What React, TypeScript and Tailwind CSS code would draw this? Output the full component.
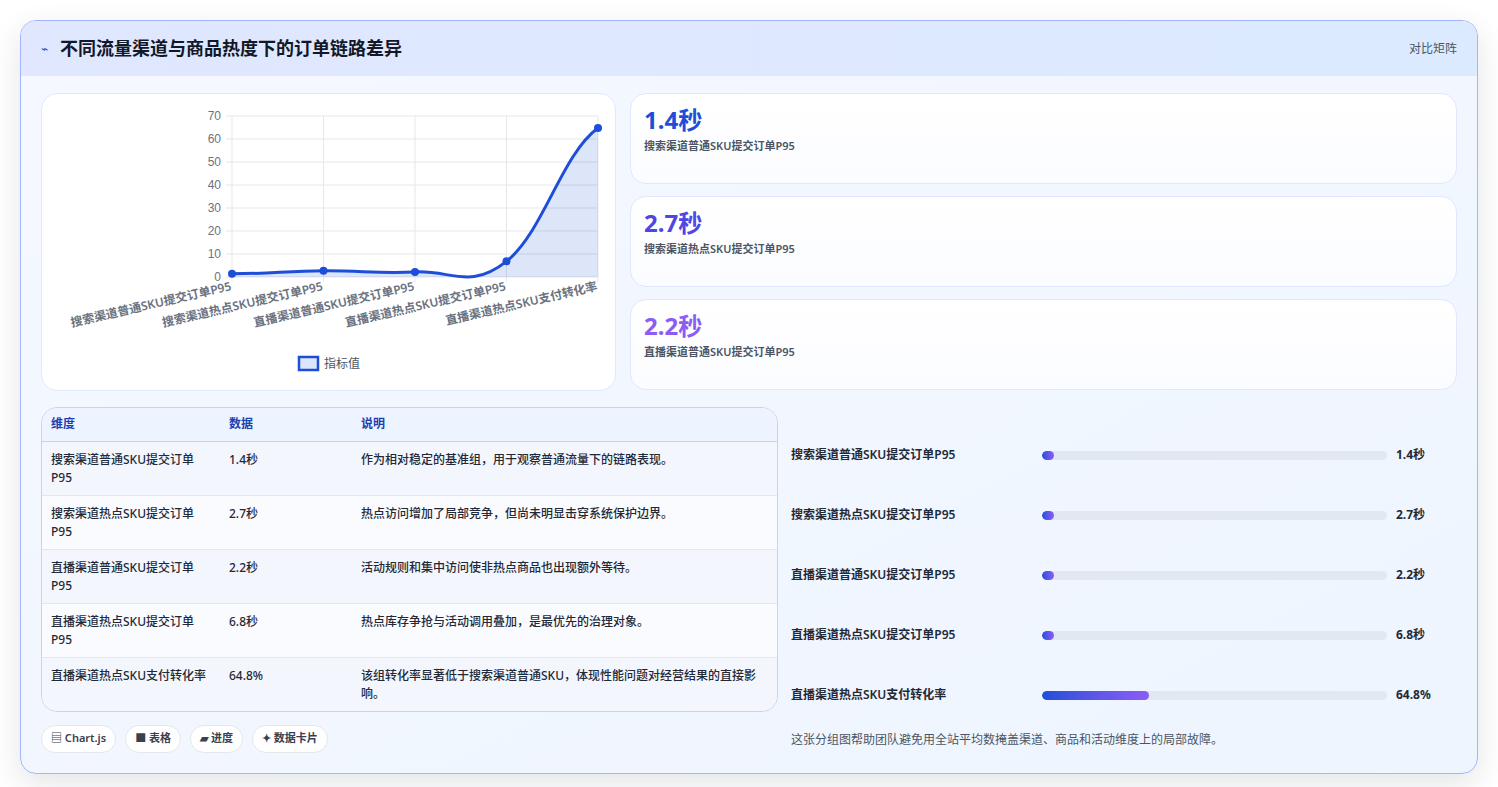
import React from "react";

const F = { fontFamily: '"Noto Sans", "Noto Sans CJK SC", sans-serif' };
const vals = [1.4, 2.7, 2.2, 6.8, 64.8];
const labels = ["搜索渠道普通SKU提交订单P95", "搜索渠道热点SKU提交订单P95", "直播渠道普通SKU提交订单P95", "直播渠道热点SKU提交订单P95", "直播渠道热点SKU支付转化率"];
const xs = [190, 281.5, 373, 464.5, 556];
const y = (v: number) => 183 - (v / 70) * 161;

function Chart() {
  const pts = vals.map((v, i) => [xs[i], y(v)]);
  let d = `M${pts[0][0]},${pts[0][1]}`;
  for (let i = 1; i < pts.length; i++) {
    const [x0, y0] = pts[i - 1];
    const [x1, y1] = pts[i];
    const dx = (x1 - x0) / 2.5;
    const prevSlope = i > 1 ? (y1 - pts[i - 2][1]) / (x1 - pts[i - 2][0]) : 0;
    const nextSlope = i < pts.length - 1 ? (pts[i + 1][1] - y0) / (pts[i + 1][0] - x0) : (y1 - y0) / (x1 - x0);
    d += ` C${x0 + dx},${y0 + prevSlope * dx * (i > 1 ? 1 : 0)} ${x1 - dx},${y1 - nextSlope * dx * (i < pts.length - 1 ? 1 : 0.5)} ${x1},${y1}`;
  }
  const area = d + ` L556,183 L190,183 Z`;
  return (
    <svg width="575" height="298" style={F}>
      {[0, 10, 20, 30, 40, 50, 60, 70].map((t) => (
        <g key={t}>
          <line x1={184} x2={556} y1={y(t)} y2={y(t)} stroke="#e5e7eb" />
          <text x={179} y={y(t) + 4} textAnchor="end" fontSize="12" fill="#6b7280" fontFamily="Liberation Sans, sans-serif">{t}</text>
        </g>
      ))}
      {xs.map((x) => <line key={x} x1={x} x2={x} y1={22} y2={188} stroke="#e5e7eb" />)}
      <path d={area} fill="rgba(29,78,216,0.15)" />
      <path d={d} fill="none" stroke="#1d4ed8" strokeWidth="3" />
      {pts.map(([a, b], i) => <circle key={i} cx={a} cy={b} r="4" fill="#1d4ed8" />)}
      {labels.map((l, i) => (
        <text key={i} transform={`translate(${xs[i]},196) rotate(-13)`} textAnchor="end" fontSize="12" fontWeight="600" fill="#6b7280">{l}</text>
      ))}
      <rect x="257" y="263" width="19" height="13" fill="rgba(29,78,216,0.15)" stroke="#1d4ed8" strokeWidth="2.5" />
      <text x="282" y="274" fontSize="12" fill="#4b5563">指标值</text>
    </svg>
  );
}

const rows = [
  ["搜索渠道普通SKU提交订单P95", "1.4秒", "作为相对稳定的基准组，用于观察普通流量下的链路表现。"],
  ["搜索渠道热点SKU提交订单P95", "2.7秒", "热点访问增加了局部竞争，但尚未明显击穿系统保护边界。"],
  ["直播渠道普通SKU提交订单P95", "2.2秒", "活动规则和集中访问使非热点商品也出现额外等待。"],
  ["直播渠道热点SKU提交订单P95", "6.8秒", "热点库存争抢与活动调用叠加，是最优先的治理对象。"],
  ["直播渠道热点SKU支付转化率", "64.8%", "该组转化率显著低于搜索渠道普通SKU，体现性能问题对经营结果的直接影响。"],
];

export default function App() {
  return (
    <div className="min-h-[787px] bg-white p-5" style={F}>
      <div className="rounded-2xl border border-[#a5b4fc] overflow-hidden shadow-[0_10px_30px_rgba(30,41,59,0.12)] bg-gradient-to-br from-[#f5f8ff] to-[#eef5ff]">
        <div className="h-[55px] flex items-center justify-between px-5 bg-gradient-to-r from-[#e0e7ff] to-[#dbeafe]">
          <div className="flex items-center gap-3">
            <span className="text-[#1d4ed8] text-xs">⌁</span>
            <span className="text-[18px] font-bold text-[#111827]">不同流量渠道与商品热度下的订单链路差异</span>
          </div>
          <span className="text-[12px] text-[#4b5563]">对比矩阵</span>
        </div>
        <div className="p-5 pt-[17px] flex flex-col gap-4">
          <div className="grid grid-cols-[575px_1fr] gap-[14px]">
            <div className="h-[298px] bg-white rounded-2xl border border-[#e0e7ff]"><Chart /></div>
            <div className="flex flex-col gap-3">
              {[["1.4秒", "text-[#1d4ed8]", 0], ["2.7秒", "text-[#4f46e5]", 1], ["2.2秒", "text-[#8b5cf6]", 2]].map(([v, c, i]) => (
                <div key={v as string} className="h-[91px] rounded-2xl border border-[#e0e7ff] bg-gradient-to-b from-white to-[#fbfcff] px-[13px] pt-[9px]">
                  <div className={`text-[24px] font-bold leading-[34px] ${c}`}>{v}</div>
                  <div className="text-[11px] font-semibold text-[#4b5563] mt-[1px]">{labels[i as number]}</div>
                </div>
              ))}
            </div>
          </div>
          <div className="grid grid-cols-[737px_1fr] gap-[13px]">
            <div>
              <div className="rounded-2xl border border-[#cbd5e1] overflow-hidden">
                <table className="w-full text-[12px] text-[#1f2937]">
                  <thead>
                    <tr className="bg-[#eef4ff] text-[#1e40af] border-b border-[#cbd5e1] h-[33px] text-left">
                      <th className="font-semibold px-[9px] w-[178px]">维度</th>
                      <th className="font-semibold px-[9px] w-[132px]">数据</th>
                      <th className="font-semibold px-[9px]">说明</th>
                    </tr>
                  </thead>
                  <tbody>
                    {rows.map((r, i) => (
                      <tr key={i} className={`${i % 2 === 0 ? "bg-[#f3f6fd]" : "bg-[#fafbfe]"} ${i < 4 ? "border-b border-[#e2e8f0]" : ""} align-top`}>
                        {r.map((c, j) => <td key={j} className="px-[9px] pt-[9px] pb-[8px] h-[53px] leading-[18px] font-medium">{c}</td>)}
                      </tr>
                    ))}
                  </tbody>
                </table>
              </div>
              <div className="flex gap-[9px] mt-[13px]">
                {["▤ Chart.js", "■ 表格", "▰ 进度", "✦ 数据卡片"].map((t) => (
                  <span key={t} className="h-[28px] px-[9px] rounded-full bg-white border border-[#e5e7eb] text-[11px] font-semibold text-[#374151] flex items-center">{t}</span>
                ))}
              </div>
            </div>
            <div className="flex flex-col pt-[17px]">
              {rows.map((r, i) => {
                const pct = i === 4 ? 31 : 3.5;
                return (
                  <div key={i} className="flex items-center h-[62px] -mt-[2px] first:mt-0" style={{ height: 62 }}>
                    <span className="w-[251px] text-[12px] font-semibold text-[#1f2937]">{r[0]}</span>
                    <div className="w-[345px] h-[9px] rounded-full bg-[#e2e8f0] overflow-hidden">
                      <div className="h-full rounded-full bg-gradient-to-r from-[#1d4ed8] to-[#8b5cf6]" style={{ width: `${pct}%` }} />
                    </div>
                    <span className="ml-[9px] text-[12px] font-bold text-[#1f2937]">{r[1]}</span>
                  </div>
                );
              })}
              <div className="text-[12px] text-[#4b5563] mt-[5px]">这张分组图帮助团队避免用全站平均数掩盖渠道、商品和活动维度上的局部故障。</div>
            </div>
          </div>
        </div>
      </div>
    </div>
  );
}
